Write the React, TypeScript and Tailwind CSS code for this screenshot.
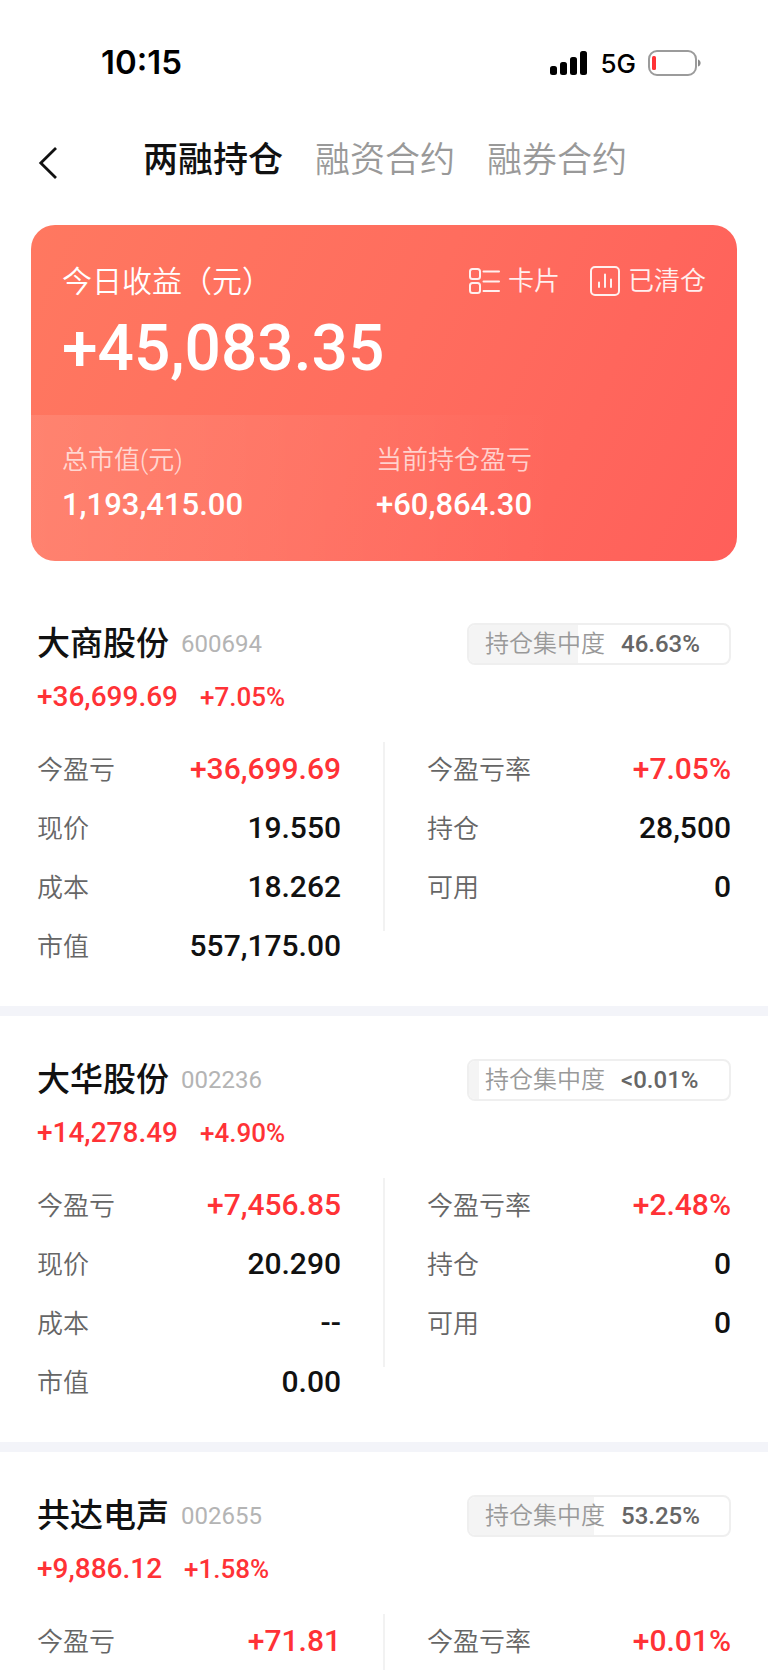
import React from 'react';
import clsx from 'clsx';

interface Row {
  label: string;
  value: string;
  up?: boolean;
}

interface Stock {
  name: string;
  code: string;
  profit: string;
  rate: string;
  share: string;
  fill: number;
  left: Row[];
  right: Row[];
}

const stocks: Stock[] = [
  {
    name: '大商股份',
    code: '600694',
    profit: '+36,699.69',
    rate: '+7.05%',
    share: '46.63%',
    fill: 42,
    left: [
      { label: '今盈亏', value: '+36,699.69', up: true },
      { label: '现价', value: '19.550' },
      { label: '成本', value: '18.262' },
      { label: '市值', value: '557,175.00' },
    ],
    right: [
      { label: '今盈亏率', value: '+7.05%', up: true },
      { label: '持仓', value: '28,500' },
      { label: '可用', value: '0' },
    ],
  },
  {
    name: '大华股份',
    code: '002236',
    profit: '+14,278.49',
    rate: '+4.90%',
    share: '<0.01%',
    fill: 4,
    left: [
      { label: '今盈亏', value: '+7,456.85', up: true },
      { label: '现价', value: '20.290' },
      { label: '成本', value: '--' },
      { label: '市值', value: '0.00' },
    ],
    right: [
      { label: '今盈亏率', value: '+2.48%', up: true },
      { label: '持仓', value: '0' },
      { label: '可用', value: '0' },
    ],
  },
  {
    name: '共达电声',
    code: '002655',
    profit: '+9,886.12',
    rate: '+1.58%',
    share: '53.25%',
    fill: 48,
    left: [{ label: '今盈亏', value: '+71.81', up: true }],
    right: [{ label: '今盈亏率', value: '+0.01%', up: true }],
  },
];

const tabs = ['两融持仓', '融资合约', '融券合约'];

const StatusBar = () => (
  <div className="flex h-[124px] items-center justify-between pt-[2px] pl-[101px] pr-[67px] font-['Inter',sans-serif] text-black">
    <span className="text-[33px] font-semibold">10:15</span>
    <div className="flex items-center gap-3">
      <svg width="38" height="24" viewBox="0 0 38 24" fill="currentColor" aria-hidden="true">
        <rect x="0" y="15" width="7" height="9" rx="2.500" />
        <rect x="10" y="11" width="7" height="13" rx="2.500" />
        <rect x="20" y="6" width="7" height="18" rx="2.500" />
        <rect x="30" y="0" width="7" height="24" rx="2.500" />
      </svg>
      <span className="text-[26px] font-medium">5G</span>
      <svg width="53" height="26" viewBox="0 0 53 26" fill="none" aria-hidden="true">
        <rect x="1" y="1" width="47" height="24" rx="8" stroke="#9b9b9b" strokeWidth="2" />
        <rect x="4" y="6" width="4" height="14" rx="1.500" fill="#ff3236" />
        <path d="M50 9.500c3.500 1 3.500 6 0 7z" fill="#8a8a8a" />
      </svg>
    </div>
  </div>
);

const NavBar = () => (
  <div className="flex h-[70px] items-center pt-1 pl-9">
    <button aria-label="返回" className="w-[107px] pt-1">
      <svg width="24" height="36" viewBox="0 0 24 36" fill="none" stroke="#111" strokeWidth="2.800" aria-hidden="true">
        <path d="M20 3 4.800 18 20 33" />
      </svg>
    </button>
    <nav className="flex gap-8">
      {tabs.map((tab, i) => (
        <button key={tab} className={clsx('text-[35px] leading-[50px]', i === 0 ? 'font-medium text-[#111]' : 'font-[350] text-[#999]')}>
          {tab}
        </button>
      ))}
    </nav>
  </div>
);

const SummaryCard = () => (
  <section className="mx-[31px] mt-[31px] overflow-hidden rounded-[24px] bg-linear-[115deg,#ff7860,#ff6d5e_50%,#ff5f5a] text-white">
    <div className="h-[190px] px-[31px] pt-8">
      <div className="flex h-12 items-center justify-between">
        <h1 className="text-[30px] font-[350]">今日收益（元）</h1>
        <div className="flex gap-[30px] text-[26px] font-[350] text-white/90">
          <button className="flex items-center gap-2">
            <svg width="31" height="26" viewBox="0 0 31 26" fill="none" stroke="currentColor" strokeWidth="2" strokeLinecap="round" aria-hidden="true">
              <rect x="1" y="1" width="10" height="10" rx="2.500" />
              <rect x="1" y="15" width="10" height="10" rx="2.500" />
              <path d="M14.500 3.500H30M14.500 13.500H30M14.500 23H30" />
            </svg>
            卡片
          </button>
          <button className="flex items-center gap-2">
            <svg width="30" height="30" viewBox="0 0 30 30" fill="none" stroke="currentColor" strokeWidth="2" strokeLinecap="round" aria-hidden="true">
              <rect x="1" y="1" width="28" height="28" rx="4" />
              <path d="M9 16.500V21M15 8.500V21M21 13.500V21" />
            </svg>
            已清仓
          </button>
        </div>
      </div>
      <p className="mt-6 text-[64px] leading-10 font-medium">+45,083.35</p>
    </div>
    <div className="grid grid-cols-2 bg-linear-to-r from-white/10 to-white/0 to-75% pt-[25px] pr-[47px] pb-[34px] pl-[31px]">
      {[
        ['总市值(元)', '1,193,415.00'],
        ['当前持仓盈亏', '+60,864.30'],
      ].map(([label, value]) => (
        <div key={label}>
          <p className="text-[26px] leading-10 font-[350] text-white/70">{label}</p>
          <p className="mt-[3px] text-[31px] leading-[44px] font-medium">{value}</p>
        </div>
      ))}
    </div>
  </section>
);

const RowList = ({ rows }: { rows: Row[] }) => (
  <dl className="flex-1">
    {rows.map(row => (
      <div key={row.label} className="flex h-[59px] items-baseline justify-between leading-[59px]">
        <dt className="text-[26px] font-[350] text-[#666]">{row.label}</dt>
        <dd className={clsx('text-[30px] font-medium', row.up ? 'text-[#ff3236]' : 'text-[#111]')}>{row.value}</dd>
      </div>
    ))}
  </dl>
);

const StockItem = ({ stock }: { stock: Stock }) => (
  <li className="border-b-[10px] border-[#f3f4f9] px-[37px] pt-[43px] pb-[31px] last:border-b-0 last:pb-0">
    <div className="flex h-[42px] items-center justify-between">
      <div className="flex items-center gap-3 leading-[44px]">
        <h2 className="text-[33px] font-medium text-[#111]">{stock.name}</h2>
        <span className="text-[24px] text-[#b4b4b4]">{stock.code}</span>
      </div>
      <div className="relative flex h-[42px] w-[264px] items-center gap-4 overflow-hidden rounded-lg border-2 border-[#efefef] pl-4">
        <div className="absolute inset-y-0 left-0 bg-[#f4f4f4]" style={{ width: `${stock.fill}%` }} />
        <span className="relative text-[24px] font-[350] text-[#999]">持仓集中度</span>
        <span className="relative text-[24px] font-medium text-[#666]">{stock.share}</span>
      </div>
    </div>
    <div className="mt-[14px] flex h-9 items-center gap-[22px] text-[#ff3236]">
      <span className="text-[28px] font-medium">{stock.profit}</span>
      <span className="text-[26px] font-medium">{stock.rate}</span>
    </div>
    <div className="mt-6 flex gap-[42px]">
      <RowList rows={stock.left} />
      <div className="mt-[3px] max-h-[189px] w-[2px] bg-[#f2f2f2]" />
      <RowList rows={stock.right} />
    </div>
  </li>
);

export default function App() {
  return (
    <main className="bg-white font-['Roboto','Noto_Sans_CJK_SC',sans-serif]">
      <StatusBar />
      <NavBar />
      <SummaryCard />
      <ul className="mt-[19px]">
        {stocks.map(stock => (
          <StockItem key={stock.code} stock={stock} />
        ))}
      </ul>
    </main>
  );
}
